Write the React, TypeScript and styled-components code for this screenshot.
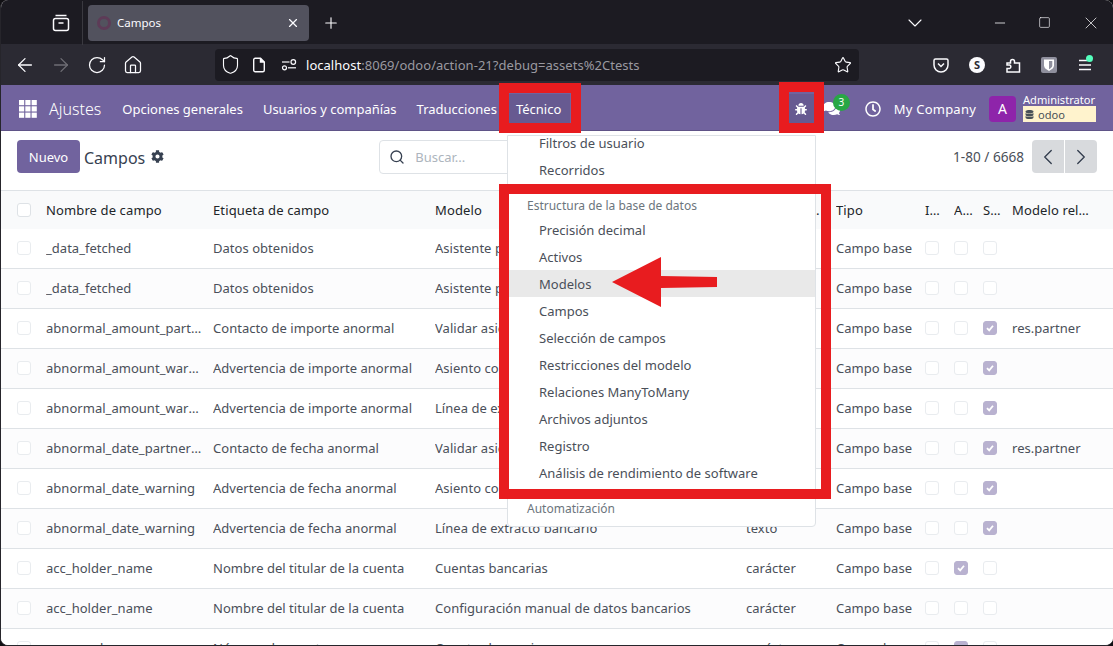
import React from 'react';
import styled, { createGlobalStyle } from 'styled-components';
import { ArrowLeft, ArrowRight, ChevronDown, ChevronLeft, ChevronRight, House, Minus, Plus, RotateCw, Search, Shield, Square, Star, X } from 'lucide-react';
import { FaBug, FaCog, FaComments, FaDatabase, FaRegClock } from 'react-icons/fa';

const Purple = '#71639e';
const UiFont = '"Noto Sans", "Open Sans", sans-serif';

const GlobalStyle = createGlobalStyle`
    html, body {
        margin: 0;
        padding: 0;
        background: #111014;
    }
    * {
        box-sizing: border-box;
    }
`;

const Screen = styled.div`
    position: relative;
    width: 1113px;
    height: 646px;
    overflow: hidden;
    background: #fff;
    border-left: 1px solid #26252b;
    border-bottom: 1px solid #26252b;
    border-radius: 8px;
    font-family: ${UiFont};
    font-size: 13px;
    color: #4a4f59;
`;

const TabBar = styled.div`
    display: flex;
    align-items: center;
    height: 44px;
    background: #1c1b22;
    color: #fbfbfe;
    padding-top: 1px;
`;

const TabViewButton = styled.div`
    display: flex;
    justify-content: center;
    width: 82px;
    padding-left: 38px;
    height: 44px;
    align-items: center;
    border-right: 1px solid #3a3940;
`;

const Tab = styled.div`
    display: flex;
    align-items: center;
    width: 221px;
    height: 36px;
    margin-left: 5px;
    padding: 0 9px;
    border-radius: 4px;
    background: #52525e;
    font-size: 11.5px;
`;

const Favicon = styled.span`
    width: 14px;
    height: 14px;
    margin-right: 6px;
    border: 3px solid #5d3b57;
    border-radius: 50%;
`;

const TabTitle = styled.span`
    flex: 1;
`;

const NewTab = styled.div`
    display: flex;
    margin-left: 13px;
`;

const WindowControls = styled.div`
    display: flex;
    align-items: center;
    margin-left: auto;
    padding-right: 12px;
    gap: 30px;
`;

const TabList = styled.div`
    display: flex;
    margin-right: 35px;
`;

const Toolbar = styled.div`
    display: flex;
    align-items: center;
    height: 41px;
    background: #2b2a33;
    color: #fbfbfe;
`;

const NavButtons = styled.div`
    display: flex;
    align-items: center;
    gap: 14px;
    padding-left: 13px;
    width: 214px;
`;

const NavButton = styled.span<{ $dim?: boolean }>`
    display: flex;
    justify-content: center;
    width: 22px;
    color: ${p => (p.$dim ? '#6f6e75' : '#fbfbfe')};
`;

const UrlBar = styled.div`
    display: flex;
    align-items: center;
    width: 644px;
    height: 32px;
    padding: 0 7px 0 5px;
    border-radius: 4px;
    background: #1c1b22;
`;

const UrlIcons = styled.div`
    display: flex;
    align-items: center;
    gap: 10px;
    margin-right: 9px;
`;

const UrlText = styled.div`
    flex: 1;
    font-size: 13px;
    letter-spacing: 0.03px;
    color: #9a99a0;
    white-space: nowrap;
`;

const UrlHost = styled.span`
    color: #fbfbfe;
`;

const ToolIcons = styled.div`
    display: flex;
    align-items: center;
    gap: 20px;
    margin-left: 74px;
`;

const ToolIcon = styled.span`
    position: relative;
    display: flex;
`;

const Dot = styled.span`
    position: absolute;
    top: -3px;
    right: 0;
    width: 7px;
    height: 7px;
    border-radius: 50%;
    background: #54ffbd;
`;

const NavBar = styled.div`
    display: flex;
    align-items: center;
    height: 46px;
    padding: 2px 0 0 18px;
    background: ${Purple};
    border-bottom: 1px solid #5f5387;
    color: #fff;
`;

const AppName = styled.span`
    margin: 0 21px 0 12px;
    font-size: 16px;
    font-weight: 300;
`;

const MenuItem = styled.span<{ $active?: boolean }>`
    padding: 0 ${p => (p.$active ? '9px' : '0')};
    margin-right: ${p => (p.$active ? '0' : '20px')};
    margin-left: ${p => (p.$active ? '-10px' : '0')};
    line-height: 30px;
    background: ${p => (p.$active ? '#675a91' : 'transparent')};
`;

const NavRight = styled.div`
    display: flex;
    align-items: center;
    margin-left: auto;
    padding-right: 17px;
`;

const BugButton = styled.span`
    display: flex;
    align-items: center;
    justify-content: center;
    width: 25px;
    height: 30px;
    background: #675a91;
    margin-right: 9px;
`;

const ChatIcon = styled.span`
    position: relative;
    display: flex;
    margin-right: 25px;
`;

const Badge = styled.span`
    position: absolute;
    top: -6px;
    left: 10px;
    width: 17px;
    height: 17px;
    border-radius: 50%;
    background: #28a745;
    font-size: 10px;
    line-height: 17px;
    text-align: center;
`;

const Company = styled.span`
    margin: 0 13px 0 13px;
    letter-spacing: 0.22px;
`;

const Avatar = styled.span`
    display: flex;
    align-items: center;
    justify-content: center;
    width: 27px;
    height: 26px;
    margin-right: 7px;
    border-radius: 4px;
    background: #8e24aa;
    font-size: 14px;
`;

const UserBlock = styled.div`
    display: flex;
    flex-direction: column;
    width: 73px;
    margin-top: -2px;
    font-size: 11.1px;
    line-height: 13px;
    white-space: nowrap;
`;

const DbTag = styled.span`
    display: flex;
    align-items: center;
    gap: 4px;
    height: 16px;
    padding-left: 2px;
    background: #fff3cd;
    color: #495057;
`;

const ControlPanel = styled.div`
    display: flex;
    align-items: center;
    height: 59px;
    padding: 9px 16px 17px 16px;
    background: #fff;
`;

const NewButton = styled.span`
    display: flex;
    align-items: center;
    justify-content: center;
    width: 63px;
    height: 33px;
    border-radius: 4px;
    background: ${Purple};
    color: #fff;
`;

const Title = styled.span`
    margin: 2px 0 0 4px;
    font-size: 16px;
    color: #374151;
`;

const GearIcon = styled.span`
    display: flex;
    margin-left: 6px;
    color: #374151;
`;

const SearchBox = styled.div`
    display: flex;
    align-items: center;
    width: 200px;
    height: 34px;
    margin-left: 215px;
    padding-left: 9px;
    gap: 10px;
    border: 1px solid #dee2e6;
    border-radius: 4px;
    color: #adb5bd;
`;

const Pager = styled.div`
    display: flex;
    align-items: center;
    margin-left: auto;
    font-size: 13.6px;
    color: #4a4f59;
`;

const PagerButtons = styled.div`
    display: flex;
    margin-left: 8px;
    gap: 1px;
`;

const PagerButton = styled.span`
    display: flex;
    align-items: center;
    justify-content: center;
    width: 32px;
    height: 33px;
    background: #d8dadd;
    color: #374151;
    &:first-child {
        border-radius: 4px 0 0 4px;
    }
    &:last-child {
        border-radius: 0 4px 4px 0;
    }
`;

const columns = '45px 167px 222px 311px 90px 89px 29px 29px 29px 1fr';

const HeaderRow = styled.div`
    display: grid;
    grid-template-columns: ${columns};
    align-items: center;
    height: 39px;
    background: #f9fafb;
    border-top: 1px solid #dee2e6;
    color: #212529;
    letter-spacing: 0.12px;
`;

const Row = styled.div<{ $striped: boolean }>`
    display: grid;
    grid-template-columns: ${columns};
    align-items: center;
    height: 40px;
    padding-bottom: 1px;
    background: ${p => (p.$striped ? '#fcfcfd' : '#fff')};
    border-bottom: 1px solid #dee2e6;
    letter-spacing: 0.03px;
`;

const Cell = styled.div`
    min-width: 0;
    padding-right: 7px;
    white-space: nowrap;
    overflow: hidden;
    text-overflow: ellipsis;
`;

const NarrowCell = styled(Cell)`
    padding-right: 13px;
`;

const LastHeaderCell = styled(Cell)`
    padding-right: 18px;
`;

const Box = styled.span<{ $checked?: boolean }>`
    display: flex;
    align-items: center;
    justify-content: center;
    width: 14px;
    height: 14px;
    border: 1px solid ${p => (p.$checked ? '#b9b2d0' : '#e9ecef')};
    border-radius: 3px;
    background: ${p => (p.$checked ? '#b9b2d0' : '#fff')};
`;

const SelectCell = styled.div`
    padding-left: 16px;
`;

const HeaderBox = styled(Box)`
    border-color: #dee2e6;
`;

const Dropdown = styled.div`
    position: absolute;
    left: 506px;
    top: 135px;
    width: 309px;
    height: 392px;
    overflow: hidden;
    background: #fff;
    border: 1px solid #dee2e6;
    border-radius: 0 0 4px 4px;
`;

const DropdownList = styled.div`
    margin-top: -7px;
`;

const DropdownItem = styled.div<{ $hover?: boolean }>`
    height: 27px;
    line-height: 29px;
    padding-left: 31px;
    background: ${p => (p.$hover ? '#e9e9e9' : 'transparent')};
`;

const DropdownHeader = styled.div`
    height: 23px;
    line-height: 25px;
    padding-left: 19px;
    font-size: 12px;
    color: #6c757d;
`;

const SectionGap = styled.div`
    height: 10px;
`;

const RedFrame = styled.div`
    position: absolute;
    border: 10px solid #e81c1f;
`;

const Arrow = styled.svg`
    position: absolute;
    left: 611px;
    top: 257px;
`;

const Check = () => (
    <svg width="10" height="10" viewBox="0 0 10 10" fill="none" stroke="#fff" strokeWidth="1.8">
        <path d="M2 5.2 4.2 7.4 8 2.8" />
    </svg>
);

const AppsIcon = () => (
    <svg width="18" height="18" viewBox="0 0 18 18" fill="#fff">
        {[0, 6.3, 12.6].map(y =>
            [0, 6.3, 12.6].map(x => <rect key={`${x}-${y}`} x={x} y={y} width="5.2" height="5.2" />)
        )}
    </svg>
);

const TabViewIcon = () => (
    <svg width="18" height="18" viewBox="0 0 18 18" fill="none" stroke="#fbfbfe" strokeWidth="1.5">
        <path d="M3.5 1.5h11" />
        <rect x="1.5" y="4.5" width="15" height="12" rx="2" />
        <path d="M6.5 9h5" />
    </svg>
);

const PageIcon = () => (
    <svg width="16" height="16" viewBox="0 0 16 16" fill="none" stroke="#fbfbfe" strokeWidth="1.4">
        <path d="M2.700 2.700A1.500 1.500 0 0 1 4.200 1.200H9.500L13.300 5v8.300A1.500 1.500 0 0 1 11.800 14.800H4.200A1.500 1.500 0 0 1 2.700 13.300Z" />
        <path d="M9.500 1.200V5H13.300" fill="#fbfbfe" />
    </svg>
);

const PermissionsIcon = () => (
    <svg width="20" height="16" viewBox="-4 0 20 16" fill="none" stroke="#fbfbfe" strokeWidth="1.2">
        <path d="M1 5h7.500" />
        <circle cx="12.300" cy="5" r="2.300" />
        <circle cx="3.500" cy="10.800" r="2" />
        <path d="M7 10.800h8" />
    </svg>
);

const PocketIcon = () => (
    <svg width="16" height="16" viewBox="0 0 16 16" fill="none" stroke="#fbfbfe" strokeWidth="1.5">
        <path d="M2.500 2h11A1.500 1.500 0 0 1 15 3.500V8A7 7 0 0 1 1 8V3.500A1.500 1.500 0 0 1 2.500 2Z" />
        <path d="M5 6.500 8 9.500 11 6.500" />
    </svg>
);

const AccountIcon = () => (
    <svg width="16" height="16" viewBox="0 0 16 16">
        <circle cx="8" cy="8" r="8" fill="#fbfbfe" />
        <text x="8" y="11.600" fontSize="11" fontWeight="700" textAnchor="middle" fill="#2b2a33" fontFamily="Noto Sans">S</text>
    </svg>
);

const ExtensionIcon = () => (
    <svg width="16" height="18" viewBox="0 0 16 18" fill="none" stroke="#fbfbfe" strokeWidth="1.5">
        <path d="M1 8h3.500V6.500a2 2 0 1 1 4 0V8H13.500v9H1v-3.500h2.500a1.800 1.800 0 0 0 0-3.500H1Z" transform="translate(1 -1)" />
    </svg>
);

const BitwardenIcon = () => (
    <svg width="16" height="16" viewBox="0 0 16 16">
        <rect width="16" height="16" rx="2" fill="#8f8f9d" />
        <path d="M3 2.500h10v6c0 2.500-2.500 4-5 5.500-2.500-1.500-5-3-5-5.500Z" fill="#fff" />
        <path d="M8 4v8.300c1.800-1 3.300-2.200 3.300-3.800V4Z" fill="#8f8f9d" />
    </svg>
);

const MenuIcon = () => (
    <svg width="16" height="14" viewBox="0 0 16 14" stroke="#fbfbfe" strokeWidth="1.3">
        <path d="M2 2.500h8M2 7h12M2 11.500h12" />
    </svg>
);

const yes = 'yes';

const rows = [
    ['_data_fetched', 'Datos obtenidos', 'Asistente para pagos', 'booleano', '', '', '', ''],
    ['_data_fetched', 'Datos obtenidos', 'Asistente para pagos', 'booleano', '', '', '', ''],
    ['abnormal_amount_partner_info', 'Contacto de importe anormal', 'Validar asiento', 'texto', '', '', yes, 'res.partner'],
    ['abnormal_amount_warning', 'Advertencia de importe anormal', 'Asiento contable', 'texto', '', '', yes, ''],
    ['abnormal_amount_warning', 'Advertencia de importe anormal', 'Línea de extracto bancario', 'texto', '', '', yes, ''],
    ['abnormal_date_partner_info', 'Contacto de fecha anormal', 'Validar asiento', 'texto', '', '', yes, 'res.partner'],
    ['abnormal_date_warning', 'Advertencia de fecha anormal', 'Asiento contable', 'texto', '', '', yes, ''],
    ['abnormal_date_warning', 'Advertencia de fecha anormal', 'Línea de extracto bancario', 'texto', '', '', yes, ''],
    ['acc_holder_name', 'Nombre del titular de la cuenta', 'Cuentas bancarias', 'carácter', '', yes, '', ''],
    ['acc_holder_name', 'Nombre del titular de la cuenta', 'Configuración manual de datos bancarios', 'carácter', '', '', '', ''],
    ['acc_number', 'Número de cuenta', 'Cuentas bancarias', 'carácter', '', yes, '', ''],
];

const topItems = ['Filtros de usuario', 'Recorridos'];
const structureItems = [
    'Precisión decimal',
    'Activos',
    'Modelos',
    'Campos',
    'Selección de campos',
    'Restricciones del modelo',
    'Relaciones ManyToMany',
    'Archivos adjuntos',
    'Registro',
    'Análisis de rendimiento de software',
];

export default function App() {
    return (
        <Screen>
            <GlobalStyle />
            <TabBar>
                <TabViewButton><TabViewIcon /></TabViewButton>
                <Tab>
                    <Favicon />
                    <TabTitle>Campos</TabTitle>
                    <X size={14} />
                </Tab>
                <NewTab><Plus size={18} strokeWidth={1.5} /></NewTab>
                <WindowControls>
                    <TabList><ChevronDown size={24} strokeWidth={1.1} /></TabList>
                    <Minus size={16} strokeWidth={1.2} />
                    <Square size={13} strokeWidth={1.2} />
                    <X size={20} strokeWidth={0.9} />
                </WindowControls>
            </TabBar>
            <Toolbar>
                <NavButtons>
                    <NavButton><ArrowLeft size={22} strokeWidth={1.4} /></NavButton>
                    <NavButton $dim><ArrowRight size={22} strokeWidth={1.4} /></NavButton>
                    <NavButton><RotateCw size={20} strokeWidth={1.5} /></NavButton>
                    <NavButton><House size={20} strokeWidth={1.5} /></NavButton>
                </NavButtons>
                <UrlBar>
                    <UrlIcons>
                        <Shield size={21} strokeWidth={1.3} />
                        <PageIcon />
                        <PermissionsIcon />
                    </UrlIcons>
                    <UrlText><UrlHost>localhost</UrlHost>:8069/odoo/action-21?debug=assets%2Ctests</UrlText>
                    <Star size={18} strokeWidth={1.5} />
                </UrlBar>
                <ToolIcons>
                    <ToolIcon><PocketIcon /></ToolIcon>
                    <ToolIcon><AccountIcon /></ToolIcon>
                    <ToolIcon><ExtensionIcon /></ToolIcon>
                    <ToolIcon><BitwardenIcon /></ToolIcon>
                    <ToolIcon><MenuIcon /><Dot /></ToolIcon>
                </ToolIcons>
            </Toolbar>
            <NavBar>
                <AppsIcon />
                <AppName>Ajustes</AppName>
                <MenuItem>Opciones generales</MenuItem>
                <MenuItem>Usuarios y compañías</MenuItem>
                <MenuItem>Traducciones</MenuItem>
                <MenuItem $active>Técnico</MenuItem>
                <NavRight>
                    <BugButton><FaBug size={12} /></BugButton>
                    <ChatIcon>
                        <FaComments size={17} />
                        <Badge>3</Badge>
                    </ChatIcon>
                    <FaRegClock size={16} />
                    <Company>My Company</Company>
                    <Avatar>A</Avatar>
                    <UserBlock>
                        Administrator
                        <DbTag><FaDatabase size={9} />odoo</DbTag>
                    </UserBlock>
                </NavRight>
            </NavBar>
            <ControlPanel>
                <NewButton>Nuevo</NewButton>
                <Title>Campos</Title>
                <GearIcon><FaCog size={13} /></GearIcon>
                <SearchBox>
                    <Search size={16} color="#374151" strokeWidth={2} />
                    Buscar...
                </SearchBox>
                <Pager>
                    1-80 / 6668
                    <PagerButtons>
                        <PagerButton><ChevronLeft size={26} strokeWidth={1.3} /></PagerButton>
                        <PagerButton><ChevronRight size={26} strokeWidth={1.3} /></PagerButton>
                    </PagerButtons>
                </Pager>
            </ControlPanel>
            <HeaderRow>
                <SelectCell><HeaderBox /></SelectCell>
                <Cell>Nombre de campo</Cell>
                <Cell>Etiqueta de campo</Cell>
                <Cell>Modelo</Cell>
                <Cell>Tipo de campo</Cell>
                <Cell>Tipo</Cell>
                <NarrowCell>Indexado</NarrowCell>
                <NarrowCell>Almacenado</NarrowCell>
                <NarrowCell>Solo lectura</NarrowCell>
                <LastHeaderCell>Modelo relacionado</LastHeaderCell>
            </HeaderRow>
            {rows.map((r, i) => (
                <Row key={i} $striped={i % 2 === 1}>
                    <SelectCell><Box /></SelectCell>
                    <Cell>{r[0]}</Cell>
                    <Cell>{r[1]}</Cell>
                    <Cell>{r[2]}</Cell>
                    <Cell>{r[3]}</Cell>
                    <Cell>Campo base</Cell>
                    {[r[4], r[5], r[6]].map((v, j) => (
                        <Box key={j} $checked={v === yes}>{v === yes && <Check />}</Box>
                    ))}
                    <Cell>{r[7]}</Cell>
                </Row>
            ))}
            <Dropdown>
                <DropdownList>
                    {topItems.map(t => <DropdownItem key={t}>{t}</DropdownItem>)}
                    <SectionGap />
                    <DropdownHeader>Estructura de la base de datos</DropdownHeader>
                    {structureItems.map(t => <DropdownItem key={t} $hover={t === 'Modelos'}>{t}</DropdownItem>)}
                    <SectionGap />
                    <DropdownHeader>Automatización</DropdownHeader>
                </DropdownList>
            </Dropdown>
            <RedFrame style={{ left: 498, top: 83, width: 82, height: 50 }} />
            <RedFrame style={{ left: 778, top: 82, width: 45, height: 51 }} />
            <RedFrame style={{ left: 498, top: 184, width: 332, height: 315 }} />
            <Arrow width="106" height="50" viewBox="0 0 106 50">
                <path d="M0 25 49 0V19L105 20V30L49 31V50Z" fill="#e81c1f" />
            </Arrow>
        </Screen>
    );
}
